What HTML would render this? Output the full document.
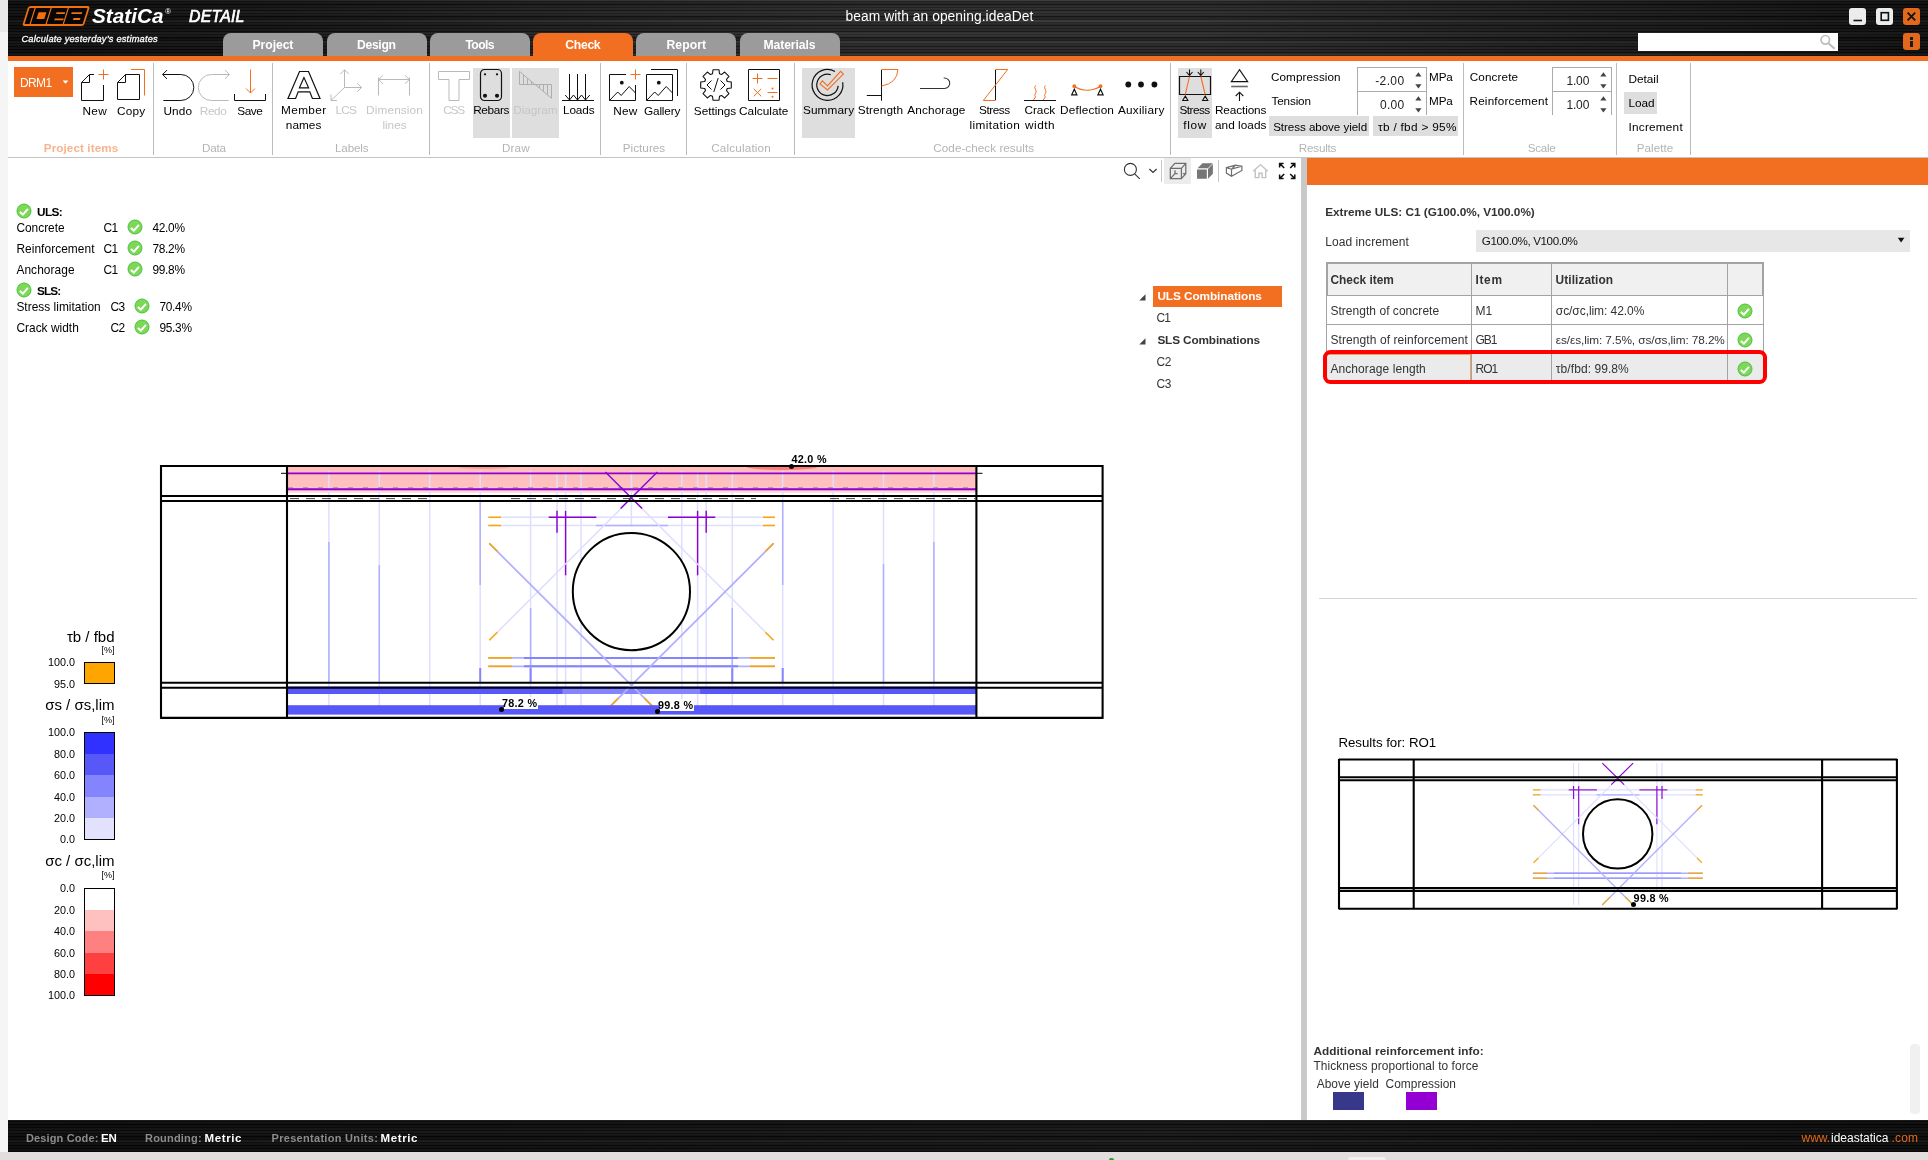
<!DOCTYPE html>
<html><head><meta charset="utf-8"><title>IDEA StatiCa Detail</title>
<style>
html,body{margin:0;padding:0;}
body{width:1928px;height:1160px;position:relative;overflow:hidden;background:#fff;
 font-family:"Liberation Sans",sans-serif;}
.t{position:absolute;white-space:nowrap;line-height:1;}
.r{position:absolute;}
svg{position:absolute;overflow:visible;}
#app{position:absolute;left:0;top:0;width:1928px;height:1160px;will-change:transform;}
</style></head>
<body>
<div id="app">
<div class="r" style="left:0px;top:0px;width:8px;height:1160px;background:#f5f5f5;"></div>
<div class="r" style="left:0px;top:0px;width:8px;height:32px;background:#e9e9e9;"></div>
<div class="r" style="left:0px;top:1152px;width:1928px;height:8px;background:#e3dddd;"></div>
<div class="r" style="left:8px;top:0;width:1920px;height:56px;background:repeating-linear-gradient(180deg,rgba(255,255,255,0.06) 0px,rgba(0,0,0,0.28) 1.5px,rgba(255,255,255,0.05) 3px),repeating-linear-gradient(180deg,rgba(0,0,0,0) 0px,rgba(0,0,0,0.38) 3.5px,rgba(0,0,0,0) 7px),repeating-linear-gradient(180deg,rgba(255,255,255,0.05) 0px,rgba(0,0,0,0.22) 5.5px,rgba(255,255,255,0.05) 11px),linear-gradient(90deg,#0a0a0a 0%,#121212 10%,#262626 28%,#363636 45%,#363636 62%,#1e1e1e 85%,#0c0c0c 100%);"></div>
<div class="r" style="left:8px;top:56px;width:1920px;height:5px;background:#f26f21;"></div>
<div class="r" style="left:8px;top:1120px;width:1920px;height:32px;background:repeating-linear-gradient(180deg,rgba(255,255,255,0.06) 0px,rgba(0,0,0,0.28) 1.5px,rgba(255,255,255,0.05) 3px),repeating-linear-gradient(180deg,rgba(0,0,0,0) 0px,rgba(0,0,0,0.38) 3.5px,rgba(0,0,0,0) 7px),repeating-linear-gradient(180deg,rgba(255,255,255,0.05) 0px,rgba(0,0,0,0.22) 5.5px,rgba(255,255,255,0.05) 11px),linear-gradient(90deg,#080808 0%,#101010 30%,#181818 60%,#080808 100%);"></div>
<div class="r" style="left:1347.5px;top:1157px;width:38px;height:4px;background:#f4f0f0;border-radius:3px 3px 0 0;"></div>
<div class="r" style="left:1109px;top:1158.4px;width:5px;height:3px;background:#22a522;border-radius:2px 2px 0 0;"></div>
<svg style="left:0;top:0" width="100" height="30" viewBox="0 0 100 30"><g transform="skewX(-17.5)"><rect x="31.2" y="7" width="59.9" height="18" rx="1.6" fill="#060606" stroke="#f26f0c" stroke-width="1.8"/><path d="M37.7 7.5v17M53.7 7.5v17M70.9 7.5v17" stroke="#f26f0c" stroke-width="1.25" fill="none"/><rect x="42.4" y="12.2" width="7.9" height="6.8" fill="#f26f0c"/><rect x="60.4" y="12.2" width="8.6" height="1.9" fill="#f26f0c"/><rect x="60.6" y="18.4" width="9" height="1.9" fill="#f26f0c"/><rect x="75.6" y="12.2" width="10.6" height="1.9" fill="#f26f0c"/><rect x="79.2" y="18" width="7" height="2.1" fill="#f26f0c"/></g></svg>
<div class="t" style="left:92.40px;top:7.00px;font-size:19.6px;font-weight:bold;color:#fff;font-style:italic;transform:scaleX(1.06);transform-origin:0 0;">StatiCa</div>
<div class="t" style="left:165.00px;top:8.00px;font-size:8px;font-weight:normal;color:#fff;font-style:italic;">&reg;</div>
<div class="t" style="left:189.00px;top:9.00px;font-size:15.8px;font-weight:normal;color:#fff;letter-spacing:0.25px;font-style:italic;-webkit-text-stroke:0.7px #fff;">DETAIL</div>
<div class="t" style="left:21.40px;top:35.00px;font-size:9.3px;font-weight:normal;color:#fff;letter-spacing:0.193px;font-style:italic;-webkit-text-stroke:0.3px #fff;">Calculate yesterday&#8217;s estimates</div>
<div class="t" style="left:939.53px;top:10.00px;font-size:13.8px;font-weight:normal;color:#fff;transform:translateX(-50%);letter-spacing:0.056px;">beam with an opening.ideaDet</div>
<div class="r" style="left:223px;top:33px;width:100px;height:23px;background:#9b9b9b;border-radius:8px 8px 0 0;"></div>
<div class="t" style="left:272.96px;top:39.00px;font-size:12.2px;font-weight:bold;color:#fff;transform:translateX(-50%);letter-spacing:-0.08px;">Project</div>
<div class="r" style="left:326.5px;top:33px;width:100px;height:23px;background:#9b9b9b;border-radius:8px 8px 0 0;"></div>
<div class="t" style="left:376.34px;top:39.00px;font-size:12.2px;font-weight:bold;color:#fff;transform:translateX(-50%);letter-spacing:-0.329px;">Design</div>
<div class="r" style="left:430px;top:33px;width:100px;height:23px;background:#9b9b9b;border-radius:8px 8px 0 0;"></div>
<div class="t" style="left:479.69px;top:39.00px;font-size:12.2px;font-weight:bold;color:#fff;transform:translateX(-50%);letter-spacing:-0.625px;">Tools</div>
<div class="r" style="left:533px;top:33px;width:100px;height:23px;background:#f26f21;border-radius:8px 8px 0 0;"></div>
<div class="t" style="left:582.84px;top:39.00px;font-size:12.2px;font-weight:bold;color:#fff;transform:translateX(-50%);letter-spacing:-0.324px;">Check</div>
<div class="r" style="left:636.3px;top:33px;width:100px;height:23px;background:#9b9b9b;border-radius:8px 8px 0 0;"></div>
<div class="t" style="left:686.33px;top:39.00px;font-size:12.2px;font-weight:bold;color:#fff;transform:translateX(-50%);letter-spacing:0.065px;">Report</div>
<div class="r" style="left:739.5px;top:33px;width:100px;height:23px;background:#9b9b9b;border-radius:8px 8px 0 0;"></div>
<div class="t" style="left:789.44px;top:39.00px;font-size:12.2px;font-weight:bold;color:#fff;transform:translateX(-50%);letter-spacing:-0.122px;">Materials</div>
<div class="r" style="left:1849px;top:8px;width:17px;height:17px;background:#ececec;border-radius:3px;"></div>
<div class="r" style="left:1876px;top:8px;width:17px;height:17px;background:#ececec;border-radius:3px;"></div>
<div class="r" style="left:1903px;top:8px;width:17px;height:17px;background:#e2681c;border-radius:3px;"></div>
<svg style="left:1849px;top:8px" width="71" height="17" viewBox="0 0 71 17"><path d="M4.5 12.5h8.5" stroke="#111" stroke-width="1.6" fill="none"/><rect x="32.2" y="4.7" width="7.2" height="7.6" stroke="#111" stroke-width="1.6" fill="none"/><path d="M58.6 4.6l7.6 7.8M66.2 4.6l-7.6 7.8" stroke="#111" stroke-width="1.8" fill="none"/></svg>
<div class="r" style="left:1638px;top:33px;width:200px;height:18px;background:#fff;"></div>
<svg style="left:1818px;top:33px" width="20" height="18" viewBox="0 0 20 18"><circle cx="7.3" cy="6.8" r="4.3" stroke="#bdbdbd" stroke-width="1.7" fill="none"/><path d="M10.4 10.2l6.2 5.6" stroke="#bdbdbd" stroke-width="2.2" fill="none"/></svg>
<div class="r" style="left:1903px;top:33px;width:17px;height:17px;background:#e2681c;border-radius:3px;"></div>
<div class="r" style="left:1910.2px;top:37.1px;width:3px;height:3px;background:#1a1a1a;"></div>
<div class="r" style="left:1910.2px;top:41.2px;width:3px;height:5.4px;background:#1a1a1a;"></div>
<div class="t" style="left:26.00px;top:1133.00px;font-size:11px;font-weight:bold;color:#8c8c8c;letter-spacing:0.134px;">Design Code:</div>
<div class="t" style="left:101.00px;top:1133.00px;font-size:11.5px;font-weight:bold;color:#fff;letter-spacing:-0.238px;">EN</div>
<div class="t" style="left:145.00px;top:1133.00px;font-size:11px;font-weight:bold;color:#8c8c8c;letter-spacing:0.202px;">Rounding:</div>
<div class="t" style="left:204.60px;top:1133.00px;font-size:11.5px;font-weight:bold;color:#fff;letter-spacing:0.605px;">Metric</div>
<div class="t" style="left:271.50px;top:1133.00px;font-size:11px;font-weight:bold;color:#8c8c8c;letter-spacing:0.303px;">Presentation Units:</div>
<div class="t" style="left:380.60px;top:1133.00px;font-size:11.5px;font-weight:bold;color:#fff;letter-spacing:0.605px;">Metric</div>
<div class="t" style="left:1801.50px;top:1132.00px;font-size:12px;font-weight:normal;color:#e2681c;letter-spacing:0.007px;">www.</div>
<div class="t" style="left:1831.00px;top:1132.00px;font-size:12px;font-weight:normal;color:#fff;letter-spacing:0.003px;">ideastatica</div>
<div class="t" style="left:1891.60px;top:1132.00px;font-size:12px;font-weight:normal;color:#e2681c;letter-spacing:0.099px;">.com</div>
<div class="r" style="left:8px;top:157px;width:1920px;height:1px;background:#c4c4c4;"></div>
<div class="r" style="left:153px;top:63px;width:1px;height:92px;background:#bcbcbc;"></div>
<div class="r" style="left:272px;top:63px;width:1px;height:92px;background:#bcbcbc;"></div>
<div class="r" style="left:429px;top:63px;width:1px;height:92px;background:#bcbcbc;"></div>
<div class="r" style="left:600px;top:63px;width:1px;height:92px;background:#bcbcbc;"></div>
<div class="r" style="left:686px;top:63px;width:1px;height:92px;background:#bcbcbc;"></div>
<div class="r" style="left:794px;top:63px;width:1px;height:92px;background:#bcbcbc;"></div>
<div class="r" style="left:1170px;top:63px;width:1px;height:92px;background:#bcbcbc;"></div>
<div class="r" style="left:1463px;top:63px;width:1px;height:92px;background:#bcbcbc;"></div>
<div class="r" style="left:1616px;top:63px;width:1px;height:92px;background:#bcbcbc;"></div>
<div class="r" style="left:1690px;top:63px;width:1px;height:92px;background:#bcbcbc;"></div>
<div class="t" style="left:81.04px;top:142.00px;font-size:11.7px;font-weight:bold;color:#f8b48c;transform:translateX(-50%);letter-spacing:0.086px;">Project items</div>
<div class="t" style="left:213.89px;top:142.00px;font-size:11.7px;font-weight:normal;color:#b4b4b4;transform:translateX(-50%);letter-spacing:-0.229px;">Data</div>
<div class="t" style="left:351.71px;top:142.00px;font-size:11.7px;font-weight:normal;color:#b4b4b4;transform:translateX(-50%);letter-spacing:-0.18px;">Labels</div>
<div class="t" style="left:515.87px;top:142.00px;font-size:11.7px;font-weight:normal;color:#b4b4b4;transform:translateX(-50%);letter-spacing:0.149px;">Draw</div>
<div class="t" style="left:644.01px;top:142.00px;font-size:11.7px;font-weight:normal;color:#b4b4b4;transform:translateX(-50%);letter-spacing:0.029px;">Pictures</div>
<div class="t" style="left:741.09px;top:142.00px;font-size:11.7px;font-weight:normal;color:#b4b4b4;transform:translateX(-50%);letter-spacing:0.174px;">Calculation</div>
<div class="t" style="left:983.72px;top:142.00px;font-size:11.7px;font-weight:normal;color:#b4b4b4;transform:translateX(-50%);letter-spacing:0.042px;">Code-check results</div>
<div class="t" style="left:1317.48px;top:142.00px;font-size:11.7px;font-weight:normal;color:#b4b4b4;transform:translateX(-50%);letter-spacing:-0.245px;">Results</div>
<div class="t" style="left:1541.64px;top:142.00px;font-size:11.7px;font-weight:normal;color:#b4b4b4;transform:translateX(-50%);letter-spacing:-0.314px;">Scale</div>
<div class="t" style="left:1655.01px;top:142.00px;font-size:11.7px;font-weight:normal;color:#b4b4b4;transform:translateX(-50%);letter-spacing:0.025px;">Palette</div>
<div class="r" style="left:14px;top:67px;width:59px;height:30px;background:#f26f21;"></div>
<div class="t" style="left:20.00px;top:77.00px;font-size:12px;font-weight:normal;color:#fff;letter-spacing:-0.626px;">DRM1</div>
<svg style="left:62px;top:80px" width="8" height="5"><path d="M0.6 0.6h5.8l-2.9 3.2z" fill="#fff"/></svg>
<div class="r" style="left:473px;top:68px;width:36.6px;height:70px;background:#dedede;"></div>
<div class="r" style="left:512px;top:68px;width:46.8px;height:70px;background:#dedede;"></div>
<div class="r" style="left:802px;top:68px;width:53px;height:70px;background:#dedede;"></div>
<div class="r" style="left:1178px;top:68px;width:34px;height:70px;background:#dedede;"></div>
<svg style="left:79px;top:69px" width="32" height="32" viewBox="0 0 32 32" fill="none" stroke-linecap="butt"><path d="M24.5 16v15.5H2.5V13.5L10.5 5.5H15 M2.5 13.5h8V5.5" stroke="#111" stroke-width="1" /><path d="M24.5 0.5v10M19.5 5.5h10" stroke="#f26f21" stroke-width="1" /></svg>
<div class="t" style="left:94.75px;top:106.00px;font-size:11.8px;font-weight:normal;color:#000;transform:translateX(-50%);letter-spacing:0.298px;">New</div>
<svg style="left:115px;top:69px" width="32" height="32" viewBox="0 0 32 32" fill="none" stroke-linecap="butt"><path d="M2.5 30.5V13.5L10.5 5.5H24.5V30.5z M2.5 13.5h8V5.5" stroke="#111" stroke-width="1" /><path d="M16 0.5h13.5v26" stroke="#f26f21" stroke-width="1" /></svg>
<div class="t" style="left:131.23px;top:106.00px;font-size:11.8px;font-weight:normal;color:#000;transform:translateX(-50%);letter-spacing:0.263px;">Copy</div>
<svg style="left:162px;top:69px" width="32" height="32" viewBox="0 0 32 32" fill="none" stroke-linecap="butt"><path d="M0.8 5.5H18.8a13 13 0 0 1 0 26H1.3" stroke="#111" stroke-width="1" /><path d="M5 1.1L0.6 5.5l4.4 4.4" stroke="#111" stroke-width="1" /></svg>
<div class="t" style="left:177.90px;top:106.00px;font-size:11.8px;font-weight:normal;color:#000;transform:translateX(-50%);letter-spacing:0.197px;">Undo</div>
<svg style="left:197px;top:69px" width="32" height="32" viewBox="0 0 32 32" fill="none" stroke-linecap="butt"><path d="M32.2 5.5H14.3a13 13 0 0 0 0 26H31.7" stroke="#b9b9b9" stroke-width="1" /><path d="M28 1.1l4.4 4.4-4.4 4.4" stroke="#b9b9b9" stroke-width="1" /></svg>
<div class="t" style="left:213.12px;top:106.00px;font-size:11.8px;font-weight:normal;color:#c6c6c6;transform:translateX(-50%);letter-spacing:-0.353px;">Redo</div>
<svg style="left:234px;top:69px" width="32" height="32" viewBox="0 0 32 32" fill="none" stroke-linecap="butt"><path d="M0.5 25v6.5h31v-6.5" stroke="#111" stroke-width="1" /><path d="M16.5 0.5v23.5M12 19.5l4.5 4.5 4.5-4.5" stroke="#f26f21" stroke-width="1" /></svg>
<div class="t" style="left:249.86px;top:106.00px;font-size:11.8px;font-weight:normal;color:#000;transform:translateX(-50%);letter-spacing:-0.474px;">Save</div>
<svg style="left:288px;top:69px" width="32" height="32" viewBox="0 0 32 32" fill="none" stroke-linecap="butt"><path d="M11.5 2.5h9L32 29.5h-7.6l-2.6-6.6H10.2l-2.6 6.6H0zM16 8.6l-4.6 10.2h9.2z" stroke="#111" stroke-width="1.2" /></svg>
<div class="t" style="left:303.79px;top:105.00px;font-size:11.8px;font-weight:normal;color:#000;transform:translateX(-50%);letter-spacing:0.387px;">Member</div>
<div class="t" style="left:303.62px;top:120.00px;font-size:11.8px;font-weight:normal;color:#000;transform:translateX(-50%);letter-spacing:0.036px;">names</div>
<svg style="left:330px;top:69px" width="32" height="32" viewBox="0 0 32 32" fill="none" stroke-linecap="butt"><path d="M14.5 0.8v18M10.3 5l4.2-4.2 4.2 4.2M14.5 18.5h17M27.3 14.3l4.2 4.2-4.2 4.2M14.5 18.5L1 31.5M1 25.6v5.9h5.9" stroke="#b9b9b9" stroke-width="1" /></svg>
<div class="t" style="left:345.79px;top:105.00px;font-size:11.8px;font-weight:normal;color:#c6c6c6;transform:translateX(-50%);letter-spacing:-0.819px;">LCS</div>
<svg style="left:378px;top:69px" width="32" height="32" viewBox="0 0 32 32" fill="none" stroke-linecap="butt"><path d="M0.5 8.5v18M31.5 8.5v18M0.5 10.5h31M5 6.2l-4.3 4.3L5 14.8M27 6.2l4.3 4.3-4.3 4.3" stroke="#b9b9b9" stroke-width="1" /></svg>
<div class="t" style="left:394.56px;top:105.00px;font-size:11.8px;font-weight:normal;color:#c6c6c6;transform:translateX(-50%);letter-spacing:0.128px;">Dimension</div>
<div class="t" style="left:394.49px;top:120.00px;font-size:11.8px;font-weight:normal;color:#c6c6c6;transform:translateX(-50%);letter-spacing:-0.014px;">lines</div>
<svg style="left:438px;top:69px" width="32" height="32" viewBox="0 0 32 32" fill="none" stroke-linecap="butt"><path d="M0.5 2.5h31v8h-10.5v21h-10v-21H0.5z" stroke="#b9b9b9" stroke-width="1" /></svg>
<div class="t" style="left:453.49px;top:105.00px;font-size:11.8px;font-weight:normal;color:#c6c6c6;transform:translateX(-50%);letter-spacing:-1.221px;">CSS</div>
<svg style="left:475px;top:69px" width="32" height="32" viewBox="0 0 32 32" fill="none" stroke-linecap="butt"><rect x="5.5" y="0.5" width="21" height="31" rx="4" stroke="#111" stroke-width="1.2"/><circle cx="10" cy="5.3" r="1.15" fill="#111"/><circle cx="22" cy="5.3" r="1.15" fill="#111"/><circle cx="10" cy="26.8" r="2.05" fill="#111"/><circle cx="22" cy="26.8" r="2.05" fill="#111"/></svg>
<div class="t" style="left:491.12px;top:105.00px;font-size:11.8px;font-weight:normal;color:#000;transform:translateX(-50%);letter-spacing:-0.357px;">Rebars</div>
<svg style="left:519px;top:69px" width="32" height="32" viewBox="0 0 32 32" fill="none" stroke-linecap="butt"><path d="M0.5 2.4V15.5H32.5V29.3L0.5 2.4M4.5 6V15.5M8.5 9.3V15.5M12.5 12.7V15.5M20.5 15.5V19M24.5 15.5V22.4M28.5 15.5V25.9" stroke="#aeaeae" stroke-width="1" /></svg>
<div class="t" style="left:535.37px;top:105.00px;font-size:11.8px;font-weight:normal;color:#c6c6c6;transform:translateX(-50%);letter-spacing:-0.07px;">Diagram</div>
<svg style="left:562px;top:69px" width="32" height="32" viewBox="0 0 32 32" fill="none" stroke-linecap="butt"><path d="M0 31.5h32M7.5 5v26M15.5 5v26M23.5 5v26M3.2 26l4.3 5 4-5 4 5 4-5 4 5 4.3-5" stroke="#111" stroke-width="1" /></svg>
<div class="t" style="left:578.73px;top:105.00px;font-size:11.8px;font-weight:normal;color:#000;transform:translateX(-50%);letter-spacing:-0.13px;">Loads</div>
<svg style="left:609px;top:69px" width="32" height="32" viewBox="0 0 32 32" fill="none" stroke-linecap="butt"><path d="M17 5.5H0.5v26h26V16" stroke="#111" stroke-width="1" /><path d="M0.5 31.5L8.7 23.0l3.5 3.5 8-9 6.3 6.5" stroke="#111" stroke-width="1" /><circle cx="12.8" cy="13.7" r="1.9" fill="#111"/><path d="M26.5 0.5v10M21.5 5.5h10" stroke="#f26f21" stroke-width="1" /></svg>
<div class="t" style="left:625.40px;top:106.00px;font-size:11.8px;font-weight:normal;color:#000;transform:translateX(-50%);letter-spacing:0.198px;">New</div>
<svg style="left:646px;top:69px" width="32" height="32" viewBox="0 0 32 32" fill="none" stroke-linecap="butt"><path d="M0.5 5.5h26v26H0.5z" stroke="#111" stroke-width="1" /><path d="M0.5 31.5L8.7 23.0l3.5 3.5 8-9 6.3 6.5" stroke="#111" stroke-width="1" /><circle cx="12.8" cy="13.7" r="1.9" fill="#111"/><path d="M5 0.5h26.5v26.5" stroke="#111" stroke-width="1" /></svg>
<div class="t" style="left:662.11px;top:106.00px;font-size:11.8px;font-weight:normal;color:#000;transform:translateX(-50%);letter-spacing:-0.182px;">Gallery</div>
<svg style="left:700px;top:69px" width="32" height="32" viewBox="0 0 32 32" fill="none" stroke-linecap="butt"><path d="M12.98 0.70L19.02 0.70L19.49 4.73L21.50 5.56L24.68 3.04L28.96 7.32L26.44 10.49L27.27 12.51L31.30 12.98L31.30 19.02L27.27 19.49L26.44 21.50L28.96 24.68L24.68 28.96L21.51 26.44L19.49 27.27L19.02 31.30L12.98 31.30L12.51 27.27L10.50 26.44L7.32 28.96L3.04 24.68L5.56 21.51L4.73 19.49L0.70 19.02L0.70 12.98L4.73 12.51L5.56 10.50L3.04 7.32L7.32 3.04L10.49 5.56L12.51 4.73z" stroke="#111" stroke-width="1.1" stroke-linejoin="round"/><path d="M11.5 11.5L7 16l4.5 4.5M20.5 11.5L25 16l-4.5 4.5M18.2 9l-4.4 14" stroke="#111" stroke-width="1" /></svg>
<div class="t" style="left:714.99px;top:106.00px;font-size:11.8px;font-weight:normal;color:#000;transform:translateX(-50%);letter-spacing:-0.03px;">Settings</div>
<svg style="left:748px;top:69px" width="32" height="32" viewBox="0 0 32 32" fill="none" stroke-linecap="butt"><path d="M0.5 0.5h31v31H0.5z" stroke="#111" stroke-width="1" /><path d="M9.5 4.5v10M4.5 9.5h10M19.5 9.5h10M5.7 19.8l7.6 7.6M13.3 19.8l-7.6 7.6M19.5 23.5h10" stroke="#f26f21" stroke-width="1" /><circle cx="24.5" cy="19.5" r="1" fill="#f26f21"/><circle cx="24.5" cy="27.7" r="1" fill="#f26f21"/></svg>
<div class="t" style="left:763.71px;top:106.00px;font-size:11.8px;font-weight:normal;color:#000;transform:translateX(-50%);letter-spacing:0.023px;">Calculate</div>
<svg style="left:812px;top:69px" width="32" height="32" viewBox="0 0 32 32" fill="none" stroke-linecap="butt"><path d="M30.67 13.23A15.4 15.4 0 1 1 22.97 2.43" stroke="#111" stroke-width="1.2" /><path d="M26.16 16.83A10.7 10.7 0 1 1 18.81 5.72" stroke="#111" stroke-width="1.2" /><path d="M8 14.9l2.4-3 5.1 5L28.6 2.4l2.8 2.7L15.5 21z" stroke="#f26f21" stroke-width="1.1" /></svg>
<div class="t" style="left:828.55px;top:105.00px;font-size:11.8px;font-weight:normal;color:#000;transform:translateX(-50%);letter-spacing:0.102px;">Summary</div>
<svg style="left:866px;top:69px" width="32" height="32" viewBox="0 0 32 32" fill="none" stroke-linecap="butt"><path d="M15.5 0.8v31M0.8 26.5h14.7" stroke="#111" stroke-width="1" /><path d="M15.5 0.5H32Q31 14.5 15.5 17" stroke="#f26f21" stroke-width="1" /></svg>
<div class="t" style="left:880.44px;top:105.00px;font-size:11.8px;font-weight:normal;color:#000;transform:translateX(-50%);letter-spacing:0.086px;">Strength</div>
<svg style="left:919px;top:69px" width="32" height="32" viewBox="0 0 32 32" fill="none" stroke-linecap="butt"><path d="M1 19.5h24.5a5.25 5.25 0 0 0 0-10.5h-0.8" stroke="#333" stroke-width="1.1" /></svg>
<div class="t" style="left:936.37px;top:105.00px;font-size:11.8px;font-weight:normal;color:#000;transform:translateX(-50%);letter-spacing:0.147px;">Anchorage</div>
<svg style="left:979px;top:69px" width="32" height="32" viewBox="0 0 32 32" fill="none" stroke-linecap="butt"><path d="M16.5 0.8v30.4" stroke="#111" stroke-width="1" /><path d="M16.5 0.5H28.7L4.3 31.5H16.5" stroke="#f26f21" stroke-width="1" /></svg>
<div class="t" style="left:994.38px;top:105.00px;font-size:11.8px;font-weight:normal;color:#000;transform:translateX(-50%);letter-spacing:-0.44px;">Stress</div>
<div class="t" style="left:994.81px;top:120.00px;font-size:11.8px;font-weight:normal;color:#000;transform:translateX(-50%);letter-spacing:0.414px;">limitation</div>
<svg style="left:1024px;top:69px" width="32" height="32" viewBox="0 0 32 32" fill="none" stroke-linecap="butt"><path d="M0 31.5h32" stroke="#111" stroke-width="1" /><path d="M11.5 16.5q-1.5 2 0 4t0 4 0 3.5l-2 3M21.3 16.5q-1.5 2 0 4t0 4 0 3.5l-2 3" stroke="#f26f21" stroke-width="1" /></svg>
<div class="t" style="left:1039.80px;top:105.00px;font-size:11.8px;font-weight:normal;color:#000;transform:translateX(-50%);letter-spacing:-0.003px;">Crack</div>
<div class="t" style="left:1040.05px;top:120.00px;font-size:11.8px;font-weight:normal;color:#000;transform:translateX(-50%);letter-spacing:0.491px;">width</div>
<svg style="left:1071px;top:69px" width="32" height="32" viewBox="0 0 32 32" fill="none" stroke-linecap="butt"><path d="M3.5 17.5Q16 25 29.5 17.5" stroke="#f26f21" stroke-width="1.2" /><circle cx="3.3" cy="17.2" r="1.9" fill="#f26f21"/><circle cx="29.5" cy="17.2" r="1.9" fill="#f26f21"/><path d="M3.3 20.2l2.6 5.6H0.7zM29.5 20.2l2.6 5.6h-5.2z" stroke="#111" stroke-width="1.2" /></svg>
<div class="t" style="left:1087.08px;top:105.00px;font-size:11.8px;font-weight:normal;color:#000;transform:translateX(-50%);letter-spacing:0.153px;">Deflection</div>
<svg style="left:1125px;top:69px" width="32" height="32" viewBox="0 0 32 32" fill="none" stroke-linecap="butt"><circle cx="3.3" cy="15.5" r="2.9" fill="#111"/><circle cx="16" cy="15.5" r="2.9" fill="#111"/><circle cx="29.4" cy="15.5" r="2.9" fill="#111"/></svg>
<div class="t" style="left:1141.22px;top:105.00px;font-size:11.8px;font-weight:normal;color:#000;transform:translateX(-50%);letter-spacing:0.234px;">Auxiliary</div>
<svg style="left:1179px;top:69px" width="32" height="32" viewBox="0 0 32 32" fill="none" stroke-linecap="butt"><path d="M0.5 7.5h31v18H0.5z" stroke="#111" stroke-width="1.2" /><path d="M10.5 7.5L6.3 25.5M21.8 7.5l4.4 18" stroke="#f26f21" stroke-width="1.1" /><path d="M10.5 0.5v6M7.5 3l3 3.5 3-3.5M21.8 0.5v6M18.8 3l3 3.5 3-3.5" stroke="#111" stroke-width="1.1" /><path d="M6.3 27l2.6 4.5H3.7zM26.2 27l2.6 4.5h-5.2z" stroke="#111" stroke-width="1.1" /></svg>
<div class="t" style="left:1194.54px;top:105.00px;font-size:11.8px;font-weight:normal;color:#000;transform:translateX(-50%);letter-spacing:-0.524px;">Stress</div>
<div class="t" style="left:1195.11px;top:120.00px;font-size:11.8px;font-weight:normal;color:#000;transform:translateX(-50%);letter-spacing:0.629px;">flow</div>
<svg style="left:1223px;top:69px" width="32" height="32" viewBox="0 0 32 32" fill="none" stroke-linecap="butt"><path d="M16.5 0.6l8.2 12H8.3z" stroke="#111" stroke-width="1.1" /><path d="M8.2 17.5h16.6" stroke="#666" stroke-width="1.6" /><path d="M16.5 32V23.5M12.7 27l3.8-3.8 3.8 3.8" stroke="#111" stroke-width="1.1" /></svg>
<div class="t" style="left:1240.64px;top:105.00px;font-size:11.8px;font-weight:normal;color:#000;transform:translateX(-50%);letter-spacing:-0.119px;">Reactions</div>
<div class="t" style="left:1240.71px;top:120.00px;font-size:11.8px;font-weight:normal;color:#000;transform:translateX(-50%);letter-spacing:0.025px;">and loads</div>
<div class="t" style="left:1271.00px;top:71.00px;font-size:11.7px;font-weight:normal;color:#000;letter-spacing:0.07px;">Compression</div>
<div class="t" style="left:1271.60px;top:95.00px;font-size:11.7px;font-weight:normal;color:#000;letter-spacing:-0.161px;">Tension</div>
<div class="r" style="left:1357px;top:67px;width:68px;height:23px;border:1px solid #ababab;"></div><div class="t" style="left:1404.50px;top:75.00px;font-size:12px;font-weight:normal;color:#222;transform:translateX(-100%);letter-spacing:0.39px;">-2.00</div><svg style="left:1414.5px;top:71.5px" width="7" height="18"><path d="M0.3 4.5h6.2l-3.1-4.2z" fill="#444"/><path d="M0.3 12.3h6.2l-3.1 4.2z" fill="#444"/></svg>
<div class="r" style="left:1357px;top:92px;width:68px;height:23px;border:1px solid #ababab;border-top:none;border-bottom:none;"></div><div class="t" style="left:1404.50px;top:99.00px;font-size:12px;font-weight:normal;color:#222;transform:translateX(-100%);letter-spacing:0.286px;">0.00</div><svg style="left:1414.5px;top:95.5px" width="7" height="18"><path d="M0.3 4.5h6.2l-3.1-4.2z" fill="#444"/><path d="M0.3 12.3h6.2l-3.1 4.2z" fill="#444"/></svg>
<div class="t" style="left:1429.00px;top:71.00px;font-size:11.7px;font-weight:normal;color:#000;letter-spacing:-0.086px;">MPa</div>
<div class="t" style="left:1429.00px;top:95.00px;font-size:11.7px;font-weight:normal;color:#000;letter-spacing:-0.086px;">MPa</div>
<div class="r" style="left:1269px;top:116px;width:100px;height:19.6px;background:#dedede;"></div>
<div class="t" style="left:1273.20px;top:121.00px;font-size:11.6px;font-weight:normal;color:#000;letter-spacing:-0.049px;">Stress above yield</div>
<div class="r" style="left:1373.3px;top:116px;width:84.5px;height:19.6px;background:#dedede;"></div>
<div class="t" style="left:1378.00px;top:122.00px;font-size:11.8px;font-weight:normal;color:#000;letter-spacing:0.298px;">&tau;b / fbd &gt; 95%</div>
<div class="t" style="left:1469.70px;top:71.00px;font-size:11.7px;font-weight:normal;color:#000;letter-spacing:0.141px;">Concrete</div>
<div class="t" style="left:1469.50px;top:95.00px;font-size:11.7px;font-weight:normal;color:#000;letter-spacing:0.201px;">Reinforcement</div>
<div class="r" style="left:1552px;top:67px;width:58px;height:23px;border:1px solid #ababab;"></div><div class="t" style="left:1589.20px;top:75.00px;font-size:12px;font-weight:normal;color:#222;transform:translateX(-100%);letter-spacing:-0.139px;">1.00</div><svg style="left:1599.5px;top:71.5px" width="7" height="18"><path d="M0.3 4.5h6.2l-3.1-4.2z" fill="#444"/><path d="M0.3 12.3h6.2l-3.1 4.2z" fill="#444"/></svg>
<div class="r" style="left:1552px;top:92px;width:58px;height:23px;border:1px solid #ababab;border-top:none;border-bottom:none;"></div><div class="t" style="left:1589.20px;top:99.00px;font-size:12px;font-weight:normal;color:#222;transform:translateX(-100%);letter-spacing:-0.139px;">1.00</div><svg style="left:1599.5px;top:95.5px" width="7" height="18"><path d="M0.3 4.5h6.2l-3.1-4.2z" fill="#444"/><path d="M0.3 12.3h6.2l-3.1 4.2z" fill="#444"/></svg>
<div class="t" style="left:1628.50px;top:74.00px;font-size:11.8px;font-weight:normal;color:#000;letter-spacing:-0.028px;">Detail</div>
<div class="r" style="left:1624px;top:92px;width:33px;height:21.8px;background:#dedede;"></div>
<div class="t" style="left:1628.50px;top:98.00px;font-size:11.8px;font-weight:normal;color:#000;letter-spacing:-0.038px;">Load</div>
<div class="t" style="left:1628.50px;top:122.00px;font-size:11.8px;font-weight:normal;color:#000;letter-spacing:0.215px;">Increment</div>
<svg style="left:16.4px;top:202.9px" width="16" height="16" viewBox="0 0 16 16"><circle cx="8" cy="8" r="7.0" fill="#7dd858" stroke="#48c33c" stroke-width="1"/><path d="M3.9 8.9l3 2.7 5-5.8" stroke="#fff" stroke-width="2" fill="none"/></svg>
<div class="t" style="left:37.00px;top:207.00px;font-size:11.8px;font-weight:bold;color:#000;letter-spacing:-0.608px;">ULS:</div>
<div class="t" style="left:16.40px;top:223.00px;font-size:11.9px;font-weight:normal;color:#000;letter-spacing:0.002px;">Concrete</div>
<div class="t" style="left:103.60px;top:223.00px;font-size:11.9px;font-weight:normal;color:#000;letter-spacing:-0.656px;">C1</div>
<svg style="left:127.2px;top:219.3px" width="16" height="16" viewBox="0 0 16 16"><circle cx="8" cy="8" r="7.0" fill="#7dd858" stroke="#48c33c" stroke-width="1"/><path d="M3.9 8.9l3 2.7 5-5.8" stroke="#fff" stroke-width="2" fill="none"/></svg>
<div class="t" style="left:152.40px;top:223.00px;font-size:11.9px;font-weight:normal;color:#000;letter-spacing:-0.268px;">42.0%</div>
<div class="t" style="left:16.40px;top:244.00px;font-size:11.9px;font-weight:normal;color:#000;letter-spacing:0.063px;">Reinforcement</div>
<div class="t" style="left:103.60px;top:244.00px;font-size:11.9px;font-weight:normal;color:#000;letter-spacing:-0.656px;">C1</div>
<svg style="left:127.2px;top:240.3px" width="16" height="16" viewBox="0 0 16 16"><circle cx="8" cy="8" r="7.0" fill="#7dd858" stroke="#48c33c" stroke-width="1"/><path d="M3.9 8.9l3 2.7 5-5.8" stroke="#fff" stroke-width="2" fill="none"/></svg>
<div class="t" style="left:152.40px;top:244.00px;font-size:11.9px;font-weight:normal;color:#000;letter-spacing:-0.268px;">78.2%</div>
<div class="t" style="left:16.40px;top:265.00px;font-size:11.9px;font-weight:normal;color:#000;letter-spacing:0.082px;">Anchorage</div>
<div class="t" style="left:103.60px;top:265.00px;font-size:11.9px;font-weight:normal;color:#000;letter-spacing:-0.656px;">C1</div>
<svg style="left:127.2px;top:261.3px" width="16" height="16" viewBox="0 0 16 16"><circle cx="8" cy="8" r="7.0" fill="#7dd858" stroke="#48c33c" stroke-width="1"/><path d="M3.9 8.9l3 2.7 5-5.8" stroke="#fff" stroke-width="2" fill="none"/></svg>
<div class="t" style="left:152.40px;top:265.00px;font-size:11.9px;font-weight:normal;color:#000;letter-spacing:-0.268px;">99.8%</div>
<svg style="left:16.4px;top:282.0px" width="16" height="16" viewBox="0 0 16 16"><circle cx="8" cy="8" r="7.0" fill="#7dd858" stroke="#48c33c" stroke-width="1"/><path d="M3.9 8.9l3 2.7 5-5.8" stroke="#fff" stroke-width="2" fill="none"/></svg>
<div class="t" style="left:37.00px;top:286.00px;font-size:11.8px;font-weight:bold;color:#000;letter-spacing:-0.87px;">SLS:</div>
<div class="t" style="left:16.40px;top:302.00px;font-size:11.9px;font-weight:normal;color:#000;letter-spacing:0.024px;">Stress limitation</div>
<div class="t" style="left:110.40px;top:302.00px;font-size:11.9px;font-weight:normal;color:#000;letter-spacing:-0.506px;">C3</div>
<svg style="left:134.2px;top:298.3px" width="16" height="16" viewBox="0 0 16 16"><circle cx="8" cy="8" r="7.0" fill="#7dd858" stroke="#48c33c" stroke-width="1"/><path d="M3.9 8.9l3 2.7 5-5.8" stroke="#fff" stroke-width="2" fill="none"/></svg>
<div class="t" style="left:159.40px;top:302.00px;font-size:11.9px;font-weight:normal;color:#000;letter-spacing:-0.268px;">70.4%</div>
<div class="t" style="left:16.40px;top:323.00px;font-size:11.9px;font-weight:normal;color:#000;letter-spacing:0.031px;">Crack width</div>
<div class="t" style="left:110.40px;top:323.00px;font-size:11.9px;font-weight:normal;color:#000;letter-spacing:-0.506px;">C2</div>
<svg style="left:134.2px;top:319.3px" width="16" height="16" viewBox="0 0 16 16"><circle cx="8" cy="8" r="7.0" fill="#7dd858" stroke="#48c33c" stroke-width="1"/><path d="M3.9 8.9l3 2.7 5-5.8" stroke="#fff" stroke-width="2" fill="none"/></svg>
<div class="t" style="left:159.40px;top:323.00px;font-size:11.9px;font-weight:normal;color:#000;letter-spacing:-0.268px;">95.3%</div>
<div class="t" style="left:114.50px;top:629.00px;font-size:15px;font-weight:normal;color:#000;transform:translateX(-100%);">&tau;b / fbd</div>
<div class="t" style="left:114.50px;top:646.00px;font-size:9px;font-weight:normal;color:#000;transform:translateX(-100%);">[%]</div>
<div class="r" style="left:84px;top:662px;width:29px;height:20px;background:#ffa500;border:1px solid #000;"></div>
<div class="t" style="left:75.00px;top:657.00px;font-size:10.8px;font-weight:normal;color:#000;transform:translateX(-100%);">100.0</div>
<div class="t" style="left:75.00px;top:679.00px;font-size:10.8px;font-weight:normal;color:#000;transform:translateX(-100%);">95.0</div>
<div class="t" style="left:114.50px;top:697.00px;font-size:15px;font-weight:normal;color:#000;transform:translateX(-100%);">&sigma;s / &sigma;s,lim</div>
<div class="t" style="left:114.50px;top:716.00px;font-size:9px;font-weight:normal;color:#000;transform:translateX(-100%);">[%]</div>
<div class="r" style="left:84px;top:732px;width:30.5px;height:22.5px;background:#3030ff;"></div><div class="r" style="left:84px;top:754px;width:30.5px;height:21.5px;background:#5858f8;"></div><div class="r" style="left:84px;top:775px;width:30.5px;height:22.5px;background:#8484ff;"></div><div class="r" style="left:84px;top:797px;width:30.5px;height:21.5px;background:#b0b0ff;"></div><div class="r" style="left:84px;top:818px;width:30.5px;height:21.5px;background:#e2e2ff;"></div><div class="r" style="left:84px;top:732px;width:29px;height:106px;border:1px solid #000;"></div>
<div class="t" style="left:75.00px;top:727.00px;font-size:10.8px;font-weight:normal;color:#000;transform:translateX(-100%);">100.0</div>
<div class="t" style="left:75.00px;top:749.00px;font-size:10.8px;font-weight:normal;color:#000;transform:translateX(-100%);">80.0</div>
<div class="t" style="left:75.00px;top:770.00px;font-size:10.8px;font-weight:normal;color:#000;transform:translateX(-100%);">60.0</div>
<div class="t" style="left:75.00px;top:792.00px;font-size:10.8px;font-weight:normal;color:#000;transform:translateX(-100%);">40.0</div>
<div class="t" style="left:75.00px;top:813.00px;font-size:10.8px;font-weight:normal;color:#000;transform:translateX(-100%);">20.0</div>
<div class="t" style="left:75.00px;top:834.00px;font-size:10.8px;font-weight:normal;color:#000;transform:translateX(-100%);">0.0</div>
<div class="t" style="left:114.50px;top:853.00px;font-size:15px;font-weight:normal;color:#000;transform:translateX(-100%);">&sigma;c / &sigma;c,lim</div>
<div class="t" style="left:114.50px;top:871.00px;font-size:9px;font-weight:normal;color:#000;transform:translateX(-100%);">[%]</div>
<div class="r" style="left:84px;top:888px;width:30.5px;height:22.5px;background:#ffffff;"></div><div class="r" style="left:84px;top:910px;width:30.5px;height:21.5px;background:#ffc0c0;"></div><div class="r" style="left:84px;top:931px;width:30.5px;height:22.5px;background:#ff8080;"></div><div class="r" style="left:84px;top:953px;width:30.5px;height:21.5px;background:#ff4040;"></div><div class="r" style="left:84px;top:974px;width:30.5px;height:21.5px;background:#ff0000;"></div><div class="r" style="left:84px;top:888px;width:29px;height:106px;border:1px solid #000;"></div>
<div class="t" style="left:75.00px;top:883.00px;font-size:10.8px;font-weight:normal;color:#000;transform:translateX(-100%);">0.0</div>
<div class="t" style="left:75.00px;top:905.00px;font-size:10.8px;font-weight:normal;color:#000;transform:translateX(-100%);">20.0</div>
<div class="t" style="left:75.00px;top:926.00px;font-size:10.8px;font-weight:normal;color:#000;transform:translateX(-100%);">40.0</div>
<div class="t" style="left:75.00px;top:948.00px;font-size:10.8px;font-weight:normal;color:#000;transform:translateX(-100%);">60.0</div>
<div class="t" style="left:75.00px;top:969.00px;font-size:10.8px;font-weight:normal;color:#000;transform:translateX(-100%);">80.0</div>
<div class="t" style="left:75.00px;top:990.00px;font-size:10.8px;font-weight:normal;color:#000;transform:translateX(-100%);">100.0</div>
<div class="r" style="left:1153px;top:286px;width:129px;height:21px;background:#f26f21;"></div>
<div class="t" style="left:1157.40px;top:291.00px;font-size:11.8px;font-weight:bold;color:#fff;letter-spacing:-0.072px;">ULS Combinations</div>
<div class="t" style="left:1156.60px;top:313.00px;font-size:11.9px;font-weight:normal;color:#333;letter-spacing:-0.806px;">C1</div>
<div class="t" style="left:1157.40px;top:335.00px;font-size:11.8px;font-weight:bold;color:#333;letter-spacing:-0.143px;">SLS Combinations</div>
<div class="t" style="left:1156.60px;top:357.00px;font-size:11.9px;font-weight:normal;color:#333;letter-spacing:-0.456px;">C2</div>
<div class="t" style="left:1156.60px;top:379.00px;font-size:11.9px;font-weight:normal;color:#333;letter-spacing:-0.456px;">C3</div>
<svg style="left:1139px;top:294px" width="7" height="7"><path d="M6.5 0.3v6.2H0.3z" fill="#444"/></svg>
<svg style="left:1139px;top:338px" width="7" height="7"><path d="M6.5 0.3v6.2H0.3z" fill="#444"/></svg>
<div class="r" style="left:1301px;top:158px;width:6px;height:962px;background:#c9c9c9;"></div>
<div class="r" style="left:1164px;top:158px;width:27px;height:26px;background:#ececec;"></div>
<div class="r" style="left:1161px;top:160px;width:1px;height:22px;background:#c8c8c8;"></div>
<div class="r" style="left:1218px;top:160px;width:1px;height:22px;background:#c8c8c8;"></div>
<svg style="left:1120px;top:160px" width="180" height="24" viewBox="1120 160 180 24" fill="none"><circle cx="1130.4" cy="169.4" r="6" stroke="#333" stroke-width="1.1"/><path d="M1134.6 173.8l5.2 5" stroke="#333" stroke-width="1.1"/><path d="M1149.4 169l3.6 3.4 3.6-3.4" stroke="#333" stroke-width="1.2"/><path d="M1170.3 168.3h11.1v10.4h-11.1zM1170.3 168.3l4.5-5h11v10.4l-4.4 5M1181.4 168.3l4.4-5M1175 170.2v3.4h2.6M1175 173.6l-4.7 5.1M1182.8 173.6h2.6" stroke="#6e6e6e" stroke-width="1.25"/><path d="M1197 169.4h9.8v9.4H1197zM1197.5 168.2l5-5h10.3l-5 5zM1208 169.1l4.9-5v9.7l-4.9 5z" fill="#767676"/><path d="M1226.4 167.6l9.1-2.5 6.4 1.1v4.3l-10.4 5.8-5.1-3.2zM1226.4 167.6l5.1 1.6 10.4-3M1231.5 169.2v7.1M1235.5 165.1l-4 4" stroke="#707070" stroke-width="1.2"/><path d="M1253.2 171.2l7.3-6.6 7.3 6.6M1255.3 170.2v7.4h3.6v-4.4h3.2v4.4h3.6v-7.4" stroke="#c2c2c2" stroke-width="1.4"/><path d="M1279.6 167.4v-4h4M1279.8 163.6l4.4 4.4M1294.8 167.4v-4h-4M1294.6 163.6l-4.4 4.4M1279.6 174.6v4h4M1279.8 178.4l4.4-4.4M1294.8 174.6v4h-4M1294.6 178.4l-4.4-4.4" stroke="#111" stroke-width="1.5"/></svg>
<svg style="left:0;top:0" width="1300" height="760" viewBox="0 0 1300 760" fill="none"><defs><linearGradient id="pinkg" x1="0" y1="0" x2="0" y2="1"><stop offset="0" stop-color="#ffbcbc"/><stop offset="0.86" stop-color="#ffc2c2"/><stop offset="1" stop-color="#ffe6e6"/></linearGradient><clipPath id="topclip"><rect x="288" y="466.6" width="688" height="20"/></clipPath></defs><rect x="288" y="467" width="688" height="26" fill="url(#pinkg)"/>
<g clip-path="url(#topclip)"><ellipse cx="782" cy="466.5" rx="36" ry="3.6" fill="#ff7a7a"/><ellipse cx="484" cy="466.5" rx="26" ry="2.4" fill="#ff9a9a"/></g>
<path d="M328.9 471.0L328.9 712.0" stroke="#dedeff" stroke-width="1.5"/>
<path d="M328.9 542.0L328.9 683.0" stroke="#b0b0ff" stroke-width="1.5"/>
<path d="M379.3 471.0L379.3 712.0" stroke="#dedeff" stroke-width="1.5"/>
<path d="M379.3 565.0L379.3 683.0" stroke="#b0b0ff" stroke-width="1.5"/>
<path d="M429.7 471.0L429.7 712.0" stroke="#dedeff" stroke-width="1.5"/>
<path d="M480.2 471.0L480.2 712.0" stroke="#dedeff" stroke-width="1.5"/>
<path d="M480.2 500.0L480.2 585.0" stroke="#b0b0ff" stroke-width="1.5"/>
<path d="M480.2 668.0L480.2 683.0" stroke="#8484ff" stroke-width="2"/>
<path d="M530.6 471.0L530.6 712.0" stroke="#dedeff" stroke-width="1.5"/>
<path d="M530.6 608.0L530.6 683.0" stroke="#b0b0ff" stroke-width="1.5"/>
<path d="M530.6 668.0L530.6 683.0" stroke="#8484ff" stroke-width="2"/>
<path d="M581.0 471.0L581.0 712.0" stroke="#dedeff" stroke-width="1.5"/>
<path d="M631.4 471.0L631.4 527.0" stroke="#dedeff" stroke-width="1.5"/>
<path d="M631.4 657.0L631.4 712.0" stroke="#dedeff" stroke-width="1.5"/>
<path d="M681.8 471.0L681.8 712.0" stroke="#dedeff" stroke-width="1.5"/>
<path d="M732.3 471.0L732.3 712.0" stroke="#dedeff" stroke-width="1.5"/>
<path d="M732.3 608.0L732.3 683.0" stroke="#b0b0ff" stroke-width="1.5"/>
<path d="M732.3 668.0L732.3 683.0" stroke="#8484ff" stroke-width="2"/>
<path d="M782.7 471.0L782.7 712.0" stroke="#dedeff" stroke-width="1.5"/>
<path d="M782.7 500.0L782.7 585.0" stroke="#b0b0ff" stroke-width="1.5"/>
<path d="M782.7 668.0L782.7 683.0" stroke="#8484ff" stroke-width="2"/>
<path d="M833.1 471.0L833.1 712.0" stroke="#dedeff" stroke-width="1.5"/>
<path d="M883.5 471.0L883.5 712.0" stroke="#dedeff" stroke-width="1.5"/>
<path d="M883.5 564.0L883.5 683.0" stroke="#b0b0ff" stroke-width="1.5"/>
<path d="M933.9 471.0L933.9 712.0" stroke="#dedeff" stroke-width="1.5"/>
<path d="M933.9 542.0L933.9 683.0" stroke="#b0b0ff" stroke-width="1.5"/>
<path d="M557.0 472.0L557.0 711.0" stroke="#dedeff" stroke-width="1.5"/>
<path d="M565.6 472.0L565.6 711.0" stroke="#dedeff" stroke-width="1.5"/>
<path d="M697.6 472.0L697.6 711.0" stroke="#dedeff" stroke-width="1.5"/>
<path d="M706.2 472.0L706.2 711.0" stroke="#dedeff" stroke-width="1.5"/>
<rect x="288.0" y="686.3" width="688.0" height="7.7" fill="#5858f8"/>
<rect x="562.4" y="688.5" width="137.8" height="5.5" fill="#8484ff"/>
<path d="M488.3 517.3L775.0 517.3" stroke="#dedeff" stroke-width="1.5"/>
<path d="M488.3 517.3L501.0 517.3" stroke="#ffa500" stroke-width="1.5"/>
<path d="M763.0 517.3L775.0 517.3" stroke="#ffa500" stroke-width="1.5"/>
<path d="M488.3 525.5L775.0 525.5" stroke="#dedeff" stroke-width="1.5"/>
<path d="M488.3 525.5L501.0 525.5" stroke="#ffa500" stroke-width="1.5"/>
<path d="M763.0 525.5L775.0 525.5" stroke="#ffa500" stroke-width="1.5"/>
<path d="M596.0 525.5L668.0 525.5" stroke="#b0b0ff" stroke-width="1.5"/>
<path d="M548.7 517.3L596.3 517.3" stroke="#8c00d2" stroke-width="1.4300000000000002"/>
<path d="M668.0 517.3L715.3 517.3" stroke="#8c00d2" stroke-width="1.4300000000000002"/>
<path d="M557.0 510.8L557.0 532.7" stroke="#8c00d2" stroke-width="1.4300000000000002"/>
<path d="M565.6 510.8L565.6 575.3" stroke="#8c00d2" stroke-width="1.4300000000000002"/>
<path d="M697.6 510.8L697.6 575.3" stroke="#8c00d2" stroke-width="1.4300000000000002"/>
<path d="M706.2 510.8L706.2 532.7" stroke="#8c00d2" stroke-width="1.4300000000000002"/>
<path d="M488.3 657.9L775.0 657.9" stroke="#b0b0ff" stroke-width="1.8"/>
<path d="M524.0 657.9L738.0 657.9" stroke="#8484ff" stroke-width="2.0"/>
<path d="M488.3 657.9L512.0 657.9" stroke="#ffa500" stroke-width="1.6"/>
<path d="M750.0 657.9L775.0 657.9" stroke="#ffa500" stroke-width="1.6"/>
<path d="M488.3 666.3L775.0 666.3" stroke="#b0b0ff" stroke-width="1.8"/>
<path d="M524.0 666.3L738.0 666.3" stroke="#8484ff" stroke-width="2.0"/>
<path d="M488.3 666.3L512.0 666.3" stroke="#ffa500" stroke-width="1.6"/>
<path d="M750.0 666.3L775.0 666.3" stroke="#ffa500" stroke-width="1.6"/>
<path d="M489.2 640.3L657.4 472.0" stroke="#dedeff" stroke-width="1.5"/>
<path d="M489.2 640.3L497.4 632.3" stroke="#ffa500" stroke-width="1.5"/>
<path d="M620.6 508.6L657.4 472.0" stroke="#8c00d2" stroke-width="1.4300000000000002"/>
<path d="M489.2 543.3L657.6 711.4" stroke="#b0b0ff" stroke-width="1.8"/>
<path d="M489.2 543.3L497.4 551.3" stroke="#ffa500" stroke-width="1.5"/>
<path d="M644.5 698.3L657.6 711.4" stroke="#ffa500" stroke-width="1.6"/>
<path d="M773.6 640.3L605.4 472.0" stroke="#dedeff" stroke-width="1.5"/>
<path d="M773.6 640.3L765.4 632.3" stroke="#ffa500" stroke-width="1.5"/>
<path d="M642.2 508.6L605.4 472.0" stroke="#8c00d2" stroke-width="1.4300000000000002"/>
<path d="M773.6 543.3L605.2 711.4" stroke="#b0b0ff" stroke-width="1.8"/>
<path d="M773.6 543.3L765.4 551.3" stroke="#ffa500" stroke-width="1.5"/>
<path d="M618.3 698.3L605.2 711.4" stroke="#ffa500" stroke-width="1.6"/>
<rect x="288.0" y="705.2" width="688.0" height="9.4" fill="#5858f8"/>
<path d="M288.0 473.3L976.0 473.3" stroke="#8c00d2" stroke-width="1.7"/>
<path d="M288.0 489.2L976.0 489.2" stroke="#8c00d2" stroke-width="1.9"/>
<path d="M288 487.6H976" stroke="#333" stroke-width="0.8" stroke-dasharray="5 10" stroke-opacity="0.4"/>
<path d="M281.0 473.3L287.0 473.3" stroke="#000" stroke-width="1"/>
<path d="M977.0 473.3L982.5 473.3" stroke="#000" stroke-width="1"/>
<path d="M290 498.6H434M511 498.6H756M830 498.6H975" stroke="#333" stroke-width="0.9" stroke-dasharray="9 7"/>
<circle cx="631.4" cy="591.6" r="58.6" fill="#fff" stroke="#000" stroke-width="2"/>
<path d="M161.0 466.0L1102.6 466.0" stroke="#000" stroke-width="2.1"/>
<path d="M161.0 717.9L1102.6 717.9" stroke="#000" stroke-width="2.1"/>
<path d="M161.0 465.0L161.0 718.9" stroke="#000" stroke-width="2.1"/>
<path d="M1102.6 465.0L1102.6 718.9" stroke="#000" stroke-width="2.1"/>
<path d="M287.0 466.0L287.0 717.9" stroke="#000" stroke-width="2.1"/>
<path d="M976.4 466.0L976.4 717.9" stroke="#000" stroke-width="2.1"/>
<path d="M161.0 496.0L1102.6 496.0" stroke="#000" stroke-width="2.1"/>
<path d="M161.0 501.0L1102.6 501.0" stroke="#000" stroke-width="2.1"/>
<path d="M161.0 682.8L1102.6 682.8" stroke="#000" stroke-width="2.1"/>
<path d="M161.0 687.8L1102.6 687.8" stroke="#000" stroke-width="2.1"/></svg>
<div class="r" style="left:793.6px;top:452.5px;width:33.6px;height:12.9px;background:#fff;"></div><div class="t" style="left:791.40px;top:454.00px;font-size:10.8px;font-weight:bold;color:#000;letter-spacing:0.296px;">42.0 %</div><div class="r" style="left:788.8px;top:463.59999999999997px;width:5.2px;height:5.2px;border-radius:50%;background:#000"></div>
<div class="r" style="left:504.1px;top:696.5px;width:33.6px;height:12.9px;background:#fff;"></div><div class="t" style="left:501.90px;top:698.00px;font-size:10.8px;font-weight:bold;color:#000;letter-spacing:0.296px;">78.2 %</div><div class="r" style="left:498.59999999999997px;top:707.1px;width:5.2px;height:5.2px;border-radius:50%;background:#000"></div>
<div class="r" style="left:660.1px;top:698.5px;width:33.6px;height:12.9px;background:#fff;"></div><div class="t" style="left:657.90px;top:700.00px;font-size:10.8px;font-weight:bold;color:#000;letter-spacing:0.296px;">99.8 %</div><div class="r" style="left:654.8px;top:708.6999999999999px;width:5.2px;height:5.2px;border-radius:50%;background:#000"></div>
<div class="r" style="left:1307px;top:158px;width:621px;height:27px;background:#f26f21;"></div>
<div class="t" style="left:1325.20px;top:207.00px;font-size:11.8px;font-weight:bold;color:#333;letter-spacing:-0.027px;">Extreme ULS: C1 (G100.0%, V100.0%)</div>
<div class="t" style="left:1325.20px;top:236.00px;font-size:12px;font-weight:normal;color:#333;letter-spacing:0.077px;">Load increment</div>
<div class="r" style="left:1476px;top:230px;width:434px;height:22px;background:#e7e7e7;"></div>
<div class="t" style="left:1481.80px;top:235.00px;font-size:11.6px;font-weight:normal;color:#111;letter-spacing:-0.381px;">G100.0%, V100.0%</div>
<svg style="left:1897px;top:237px" width="9" height="7"><path d="M0.8 0.8h6.6l-3.3 4.6z" fill="#111"/></svg>
<div class="r" style="left:1326px;top:262px;width:437.5px;height:120.5px;background:#a3a3a3;"></div>
<div class="r" style="left:1328px;top:264px;width:143px;height:31px;background:#f0f0f0;"></div>
<div class="r" style="left:1472px;top:264px;width:79px;height:31px;background:#f0f0f0;"></div>
<div class="r" style="left:1552px;top:264px;width:175px;height:31px;background:#f0f0f0;"></div>
<div class="r" style="left:1728px;top:264px;width:34px;height:31px;background:#f0f0f0;"></div>
<div class="r" style="left:1327px;top:296px;width:144px;height:28px;background:#fff;"></div>
<div class="r" style="left:1472px;top:296px;width:79px;height:28px;background:#fff;"></div>
<div class="r" style="left:1552px;top:296px;width:175px;height:28px;background:#fff;"></div>
<div class="r" style="left:1728px;top:296px;width:35px;height:28px;background:#fff;"></div>
<div class="r" style="left:1327px;top:325px;width:144px;height:28px;background:#fff;"></div>
<div class="r" style="left:1472px;top:325px;width:79px;height:28px;background:#fff;"></div>
<div class="r" style="left:1552px;top:325px;width:175px;height:28px;background:#fff;"></div>
<div class="r" style="left:1728px;top:325px;width:35px;height:28px;background:#fff;"></div>
<div class="r" style="left:1327px;top:354px;width:144px;height:28px;background:#ebebeb;"></div>
<div class="r" style="left:1472px;top:354px;width:79px;height:28px;background:#ebebeb;"></div>
<div class="r" style="left:1552px;top:354px;width:175px;height:28px;background:#ebebeb;"></div>
<div class="r" style="left:1728px;top:354px;width:35px;height:28px;background:#ebebeb;"></div>
<div class="r" style="left:1327px;top:354px;width:144px;height:28px;background:#ebebeb;box-sizing:border-box;border:1px solid #f0a060;border-left:none;border-bottom:none;"></div>
<div class="t" style="left:1330.40px;top:275.00px;font-size:11.9px;font-weight:bold;color:#333;letter-spacing:0.011px;">Check item</div>
<div class="t" style="left:1475.40px;top:275.00px;font-size:11.9px;font-weight:bold;color:#333;letter-spacing:0.733px;">Item</div>
<div class="t" style="left:1555.60px;top:275.00px;font-size:11.9px;font-weight:bold;color:#333;letter-spacing:0.068px;">Utilization</div>
<div class="t" style="left:1330.40px;top:305.00px;font-size:12px;font-weight:normal;color:#333;letter-spacing:0.037px;">Strength of concrete</div>
<div class="t" style="left:1475.40px;top:305.00px;font-size:12px;font-weight:normal;color:#333;letter-spacing:0.015px;">M1</div>
<div class="t" style="left:1555.80px;top:305.00px;font-size:12px;font-weight:normal;color:#333;letter-spacing:-0.063px;">&sigma;c/&sigma;c,lim: 42.0%</div>
<svg style="left:1737.3px;top:302.5px" width="16" height="16" viewBox="0 0 16 16"><circle cx="8" cy="8" r="7.0" fill="#7dd858" stroke="#48c33c" stroke-width="1"/><path d="M3.9 8.9l3 2.7 5-5.8" stroke="#fff" stroke-width="2" fill="none"/></svg>
<div class="t" style="left:1330.40px;top:334.00px;font-size:12px;font-weight:normal;color:#333;letter-spacing:0.088px;">Strength of reinforcement</div>
<div class="t" style="left:1475.40px;top:334.00px;font-size:12px;font-weight:normal;color:#333;letter-spacing:-1.004px;">GB1</div>
<div class="t" style="left:1555.80px;top:335.00px;font-size:11.8px;font-weight:normal;color:#333;letter-spacing:-0.09px;">&epsilon;s/&epsilon;s,lim: 7.5%, &sigma;s/&sigma;s,lim: 78.2%</div>
<svg style="left:1737.3px;top:331.5px" width="16" height="16" viewBox="0 0 16 16"><circle cx="8" cy="8" r="7.0" fill="#7dd858" stroke="#48c33c" stroke-width="1"/><path d="M3.9 8.9l3 2.7 5-5.8" stroke="#fff" stroke-width="2" fill="none"/></svg>
<div class="t" style="left:1330.40px;top:363.00px;font-size:12px;font-weight:normal;color:#333;letter-spacing:0.089px;">Anchorage length</div>
<div class="t" style="left:1475.40px;top:363.00px;font-size:12px;font-weight:normal;color:#333;letter-spacing:-0.925px;">RO1</div>
<div class="t" style="left:1555.80px;top:363.00px;font-size:12px;font-weight:normal;color:#333;letter-spacing:0.067px;">&tau;b/fbd: 99.8%</div>
<svg style="left:1737.3px;top:360.5px" width="16" height="16" viewBox="0 0 16 16"><circle cx="8" cy="8" r="7.0" fill="#7dd858" stroke="#48c33c" stroke-width="1"/><path d="M3.9 8.9l3 2.7 5-5.8" stroke="#fff" stroke-width="2" fill="none"/></svg>
<div class="r" style="left:1323px;top:350px;width:435.6px;height:25.6px;border:4.6px solid #ff0000;border-radius:7.5px;"></div>
<div class="r" style="left:1319px;top:598px;width:598px;height:1px;background:#d4d4d4;"></div>
<div class="t" style="left:1338.40px;top:736.00px;font-size:13.3px;font-weight:normal;color:#000;letter-spacing:-0.031px;">Results for: RO1</div>
<svg style="left:1300px;top:740px" width="628" height="200" viewBox="1300 740 628 200" fill="none"><path d="M1573.6 763.1L1573.6 904.7" stroke="#dedeff" stroke-width="1.15"/>
<path d="M1578.7 763.1L1578.7 904.7" stroke="#dedeff" stroke-width="1.15"/>
<path d="M1656.9 763.1L1656.9 904.7" stroke="#dedeff" stroke-width="1.15"/>
<path d="M1662.0 763.1L1662.0 904.7" stroke="#dedeff" stroke-width="1.15"/>
<path d="M1532.9 789.9L1702.8 789.9" stroke="#dedeff" stroke-width="1.15"/>
<path d="M1532.9 789.9L1540.5 789.9" stroke="#ffa500" stroke-width="1.15"/>
<path d="M1695.7 789.9L1702.8 789.9" stroke="#ffa500" stroke-width="1.15"/>
<path d="M1532.9 794.8L1702.8 794.8" stroke="#dedeff" stroke-width="1.15"/>
<path d="M1532.9 794.8L1540.5 794.8" stroke="#ffa500" stroke-width="1.15"/>
<path d="M1695.7 794.8L1702.8 794.8" stroke="#ffa500" stroke-width="1.15"/>
<path d="M1596.7 794.8L1639.4 794.8" stroke="#b0b0ff" stroke-width="1.15"/>
<path d="M1568.7 789.9L1596.9 789.9" stroke="#8c00d2" stroke-width="1.105"/>
<path d="M1639.4 789.9L1667.4 789.9" stroke="#8c00d2" stroke-width="1.105"/>
<path d="M1573.6 786.0L1573.6 799.0" stroke="#8c00d2" stroke-width="1.105"/>
<path d="M1578.7 786.0L1578.7 824.3" stroke="#8c00d2" stroke-width="1.105"/>
<path d="M1656.9 786.0L1656.9 824.3" stroke="#8c00d2" stroke-width="1.105"/>
<path d="M1662.0 786.0L1662.0 799.0" stroke="#8c00d2" stroke-width="1.105"/>
<path d="M1532.9 873.2L1702.8 873.2" stroke="#b0b0ff" stroke-width="1.35"/>
<path d="M1554.1 873.2L1680.9 873.2" stroke="#9c9cff" stroke-width="1.5"/>
<path d="M1532.9 873.2L1547.0 873.2" stroke="#ffa500" stroke-width="1.2000000000000002"/>
<path d="M1688.0 873.2L1702.8 873.2" stroke="#ffa500" stroke-width="1.2000000000000002"/>
<path d="M1532.9 878.2L1702.8 878.2" stroke="#b0b0ff" stroke-width="1.35"/>
<path d="M1554.1 878.2L1680.9 878.2" stroke="#9c9cff" stroke-width="1.5"/>
<path d="M1532.9 878.2L1547.0 878.2" stroke="#ffa500" stroke-width="1.2000000000000002"/>
<path d="M1688.0 878.2L1702.8 878.2" stroke="#ffa500" stroke-width="1.2000000000000002"/>
<path d="M1533.5 862.8L1633.1 763.1" stroke="#dedeff" stroke-width="1.15"/>
<path d="M1533.5 862.8L1538.3 858.0" stroke="#ffa500" stroke-width="1.15"/>
<path d="M1611.3 784.7L1633.1 763.1" stroke="#8c00d2" stroke-width="1.105"/>
<path d="M1533.5 805.3L1633.2 904.9" stroke="#b0b0ff" stroke-width="1.35"/>
<path d="M1533.5 805.3L1538.3 810.0" stroke="#ffa500" stroke-width="1.15"/>
<path d="M1625.5 897.1L1633.2 904.9" stroke="#ffa500" stroke-width="1.2000000000000002"/>
<path d="M1702.0 862.8L1602.3 763.1" stroke="#dedeff" stroke-width="1.15"/>
<path d="M1702.0 862.8L1697.1 858.0" stroke="#ffa500" stroke-width="1.15"/>
<path d="M1624.1 784.7L1602.3 763.1" stroke="#8c00d2" stroke-width="1.105"/>
<path d="M1702.0 805.3L1602.2 904.9" stroke="#b0b0ff" stroke-width="1.35"/>
<path d="M1702.0 805.3L1697.1 810.0" stroke="#ffa500" stroke-width="1.15"/>
<path d="M1610.0 897.1L1602.2 904.9" stroke="#ffa500" stroke-width="1.2000000000000002"/>
<circle cx="1617.7" cy="833.9" r="34.7" fill="#fff" stroke="#000" stroke-width="2"/>
<path d="M1339.0 759.5L1896.9 759.5" stroke="#000" stroke-width="2.1"/>
<path d="M1339.0 908.8L1896.9 908.8" stroke="#000" stroke-width="2.1"/>
<path d="M1339.0 758.9L1339.0 909.3" stroke="#000" stroke-width="2.1"/>
<path d="M1896.9 758.9L1896.9 909.3" stroke="#000" stroke-width="2.1"/>
<path d="M1413.7 759.5L1413.7 908.8" stroke="#000" stroke-width="2.1"/>
<path d="M1822.1 759.5L1822.1 908.8" stroke="#000" stroke-width="2.1"/>
<path d="M1339.0 777.3L1896.9 777.3" stroke="#000" stroke-width="2.1"/>
<path d="M1339.0 780.2L1896.9 780.2" stroke="#000" stroke-width="2.1"/>
<path d="M1339.0 888.0L1896.9 888.0" stroke="#000" stroke-width="2.1"/>
<path d="M1339.0 890.9L1896.9 890.9" stroke="#000" stroke-width="2.1"/></svg>
<div class="r" style="left:1636px;top:892px;width:32.5px;height:12.5px;background:#fff;"></div>
<div class="t" style="left:1633.60px;top:893.00px;font-size:10.8px;font-weight:bold;color:#000;letter-spacing:0.296px;">99.8 %</div>
<div class="r" style="left:1630.7px;top:902px;width:5.2px;height:5.2px;border-radius:50%;background:#000"></div>
<div class="t" style="left:1313.40px;top:1046.00px;font-size:11.8px;font-weight:bold;color:#333;letter-spacing:0.064px;">Additional reinforcement info:</div>
<div class="t" style="left:1313.40px;top:1061.00px;font-size:11.9px;font-weight:normal;color:#333;letter-spacing:0.08px;">Thickness proportional to force</div>
<div class="t" style="left:1316.70px;top:1079.00px;font-size:11.9px;font-weight:normal;color:#333;letter-spacing:0.061px;">Above yield</div>
<div class="t" style="left:1385.60px;top:1079.00px;font-size:11.9px;font-weight:normal;color:#333;letter-spacing:0.027px;">Compression</div>
<div class="r" style="left:1333px;top:1092px;width:31px;height:18px;background:#38388a;"></div>
<div class="r" style="left:1406px;top:1092px;width:31px;height:18px;background:#9400d3;"></div>
<div class="r" style="left:1910px;top:1043.5px;width:10px;height:70px;background:#f0f0f0;border-radius:4px;"></div>
</div>
</body></html>
